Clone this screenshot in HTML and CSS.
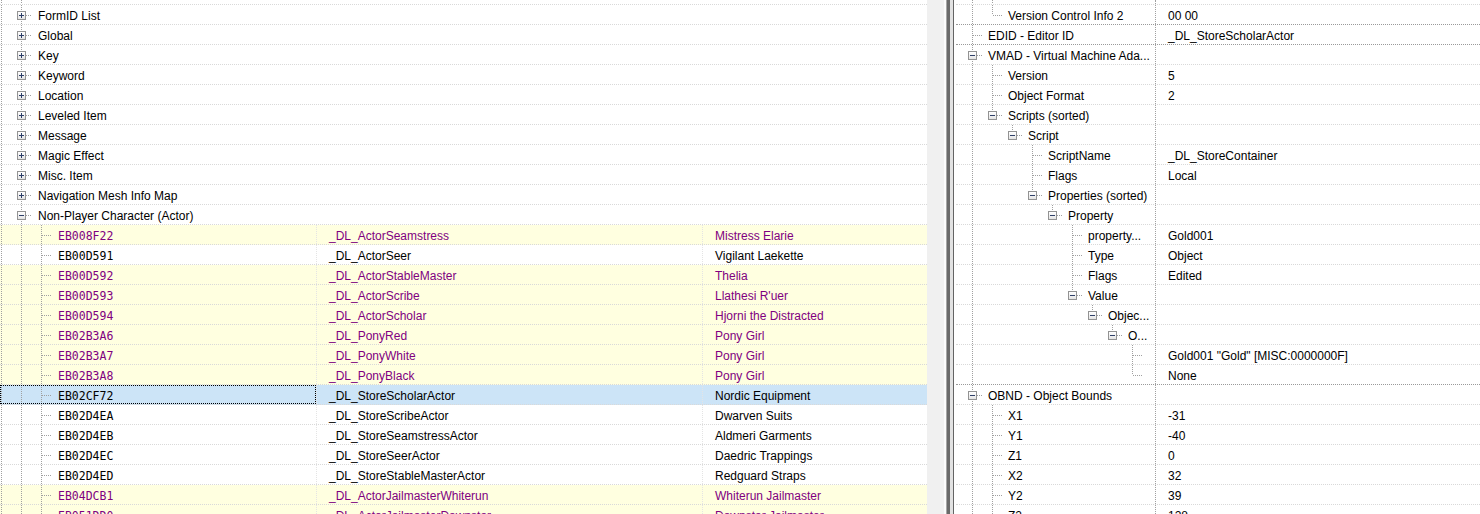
FILE: index.html
```html
<!DOCTYPE html>
<html>
<head>
  <meta charset="UTF-8">
  <title>xEdit - records</title>
  <link rel="stylesheet" href="styles.css">
</head>
<body>
<div class="app">

  <!-- record tree -->
  <div class="left">
    <div class="row top"><span class="tc g0 v"></span><span class="tc v"></span></div>
    <div class="row grp"><span class="tc g0 v"></span><span class="tc t"><i class="bx p"></i></span><span class="tx">FormID List</span></div>
    <div class="row grp"><span class="tc g0 v"></span><span class="tc t"><i class="bx p"></i></span><span class="tx">Global</span></div>
    <div class="row grp"><span class="tc g0 v"></span><span class="tc t"><i class="bx p"></i></span><span class="tx">Key</span></div>
    <div class="row grp"><span class="tc g0 v"></span><span class="tc t"><i class="bx p"></i></span><span class="tx">Keyword</span></div>
    <div class="row grp"><span class="tc g0 v"></span><span class="tc t"><i class="bx p"></i></span><span class="tx">Location</span></div>
    <div class="row grp"><span class="tc g0 v"></span><span class="tc t"><i class="bx p"></i></span><span class="tx">Leveled Item</span></div>
    <div class="row grp"><span class="tc g0 v"></span><span class="tc t"><i class="bx p"></i></span><span class="tx">Message</span></div>
    <div class="row grp"><span class="tc g0 v"></span><span class="tc t"><i class="bx p"></i></span><span class="tx">Magic Effect</span></div>
    <div class="row grp"><span class="tc g0 v"></span><span class="tc t"><i class="bx p"></i></span><span class="tx">Misc. Item</span></div>
    <div class="row grp"><span class="tc g0 v"></span><span class="tc t"><i class="bx p"></i></span><span class="tx">Navigation Mesh Info Map</span></div>
    <div class="row grp"><span class="tc g0 v"></span><span class="tc t"><i class="bx m"></i></span><span class="tx">Non-Player Character (Actor)</span></div>

    <div class="row rec hl"><div class="c1"><span class="tc g0 v"></span><span class="tc v"></span><span class="tc t"></span><span class="id">EB008F22</span></div><div class="c2">_DL_ActorSeamstress</div><div class="c3">Mistress Elarie</div></div>
    <div class="row rec"><div class="c1"><span class="tc g0 v"></span><span class="tc v"></span><span class="tc t"></span><span class="id">EB00D591</span></div><div class="c2">_DL_ActorSeer</div><div class="c3">Vigilant Laekette</div></div>
    <div class="row rec hl"><div class="c1"><span class="tc g0 v"></span><span class="tc v"></span><span class="tc t"></span><span class="id">EB00D592</span></div><div class="c2">_DL_ActorStableMaster</div><div class="c3">Thelia</div></div>
    <div class="row rec hl"><div class="c1"><span class="tc g0 v"></span><span class="tc v"></span><span class="tc t"></span><span class="id">EB00D593</span></div><div class="c2">_DL_ActorScribe</div><div class="c3">Llathesi R'uer</div></div>
    <div class="row rec hl"><div class="c1"><span class="tc g0 v"></span><span class="tc v"></span><span class="tc t"></span><span class="id">EB00D594</span></div><div class="c2">_DL_ActorScholar</div><div class="c3">Hjorni the Distracted</div></div>
    <div class="row rec hl"><div class="c1"><span class="tc g0 v"></span><span class="tc v"></span><span class="tc t"></span><span class="id">EB02B3A6</span></div><div class="c2">_DL_PonyRed</div><div class="c3">Pony Girl</div></div>
    <div class="row rec hl"><div class="c1"><span class="tc g0 v"></span><span class="tc v"></span><span class="tc t"></span><span class="id">EB02B3A7</span></div><div class="c2">_DL_PonyWhite</div><div class="c3">Pony Girl</div></div>
    <div class="row rec hl"><div class="c1"><span class="tc g0 v"></span><span class="tc v"></span><span class="tc t"></span><span class="id">EB02B3A8</span></div><div class="c2">_DL_PonyBlack</div><div class="c3">Pony Girl</div></div>
    <div class="row rec sel"><div class="c1"><span class="tc g0 v"></span><span class="tc v"></span><span class="tc t"></span><span class="id">EB02CF72</span></div><div class="c2">_DL_StoreScholarActor</div><div class="c3">Nordic Equipment</div></div>
    <div class="row rec"><div class="c1"><span class="tc g0 v"></span><span class="tc v"></span><span class="tc t"></span><span class="id">EB02D4EA</span></div><div class="c2">_DL_StoreScribeActor</div><div class="c3">Dwarven Suits</div></div>
    <div class="row rec"><div class="c1"><span class="tc g0 v"></span><span class="tc v"></span><span class="tc t"></span><span class="id">EB02D4EB</span></div><div class="c2">_DL_StoreSeamstressActor</div><div class="c3">Aldmeri Garments</div></div>
    <div class="row rec"><div class="c1"><span class="tc g0 v"></span><span class="tc v"></span><span class="tc t"></span><span class="id">EB02D4EC</span></div><div class="c2">_DL_StoreSeerActor</div><div class="c3">Daedric Trappings</div></div>
    <div class="row rec"><div class="c1"><span class="tc g0 v"></span><span class="tc v"></span><span class="tc t"></span><span class="id">EB02D4ED</span></div><div class="c2">_DL_StoreStableMasterActor</div><div class="c3">Redguard Straps</div></div>
    <div class="row rec hl"><div class="c1"><span class="tc g0 v"></span><span class="tc v"></span><span class="tc t"></span><span class="id">EB04DCB1</span></div><div class="c2">_DL_ActorJailmasterWhiterun</div><div class="c3">Whiterun Jailmaster</div></div>
    <div class="row rec hl"><div class="c1"><span class="tc g0 v"></span><span class="tc v"></span><span class="tc t"></span><span class="id">EB051DD0</span></div><div class="c2">_DL_ActorJailmasterDawnstar</div><div class="c3">Dawnstar Jailmaster</div></div>
  </div>

  <div class="split"></div>

  <!-- element view -->
  <div class="right">
    <div class="row top"><div class="nm"><span class="tc v"></span><span class="tc v"></span></div><div class="vl"></div></div>
    <div class="row end"><div class="nm"><span class="tc v"></span><span class="tc l"></span><span class="tx">Version Control Info 2</span></div><div class="vl">00 00</div></div>
    <div class="row end"><div class="nm"><span class="tc t"></span><span class="tx">EDID - Editor ID</span></div><div class="vl">_DL_StoreScholarActor</div></div>
    <div class="row"><div class="nm"><span class="tc t"><i class="bx m"></i></span><span class="tx">VMAD - Virtual Machine Ada...</span></div><div class="vl"></div></div>
    <div class="row"><div class="nm"><span class="tc v"></span><span class="tc t"></span><span class="tx">Version</span></div><div class="vl">5</div></div>
    <div class="row"><div class="nm"><span class="tc v"></span><span class="tc t"></span><span class="tx">Object Format</span></div><div class="vl">2</div></div>
    <div class="row"><div class="nm"><span class="tc v"></span><span class="tc l"><i class="bx m"></i></span><span class="tx">Scripts (sorted)</span></div><div class="vl"></div></div>
    <div class="row"><div class="nm"><span class="tc v"></span><span class="tc"></span><span class="tc l"><i class="bx m"></i></span><span class="tx">Script</span></div><div class="vl"></div></div>
    <div class="row"><div class="nm"><span class="tc v"></span><span class="tc"></span><span class="tc"></span><span class="tc t"></span><span class="tx">ScriptName</span></div><div class="vl">_DL_StoreContainer</div></div>
    <div class="row"><div class="nm"><span class="tc v"></span><span class="tc"></span><span class="tc"></span><span class="tc t"></span><span class="tx">Flags</span></div><div class="vl">Local</div></div>
    <div class="row"><div class="nm"><span class="tc v"></span><span class="tc"></span><span class="tc"></span><span class="tc l"><i class="bx m"></i></span><span class="tx">Properties (sorted)</span></div><div class="vl"></div></div>
    <div class="row"><div class="nm"><span class="tc v"></span><span class="tc"></span><span class="tc"></span><span class="tc"></span><span class="tc l"><i class="bx m"></i></span><span class="tx">Property</span></div><div class="vl"></div></div>
    <div class="row"><div class="nm"><span class="tc v"></span><span class="tc"></span><span class="tc"></span><span class="tc"></span><span class="tc"></span><span class="tc t"></span><span class="tx">property...</span></div><div class="vl">Gold001</div></div>
    <div class="row"><div class="nm"><span class="tc v"></span><span class="tc"></span><span class="tc"></span><span class="tc"></span><span class="tc"></span><span class="tc t"></span><span class="tx">Type</span></div><div class="vl">Object</div></div>
    <div class="row"><div class="nm"><span class="tc v"></span><span class="tc"></span><span class="tc"></span><span class="tc"></span><span class="tc"></span><span class="tc t"></span><span class="tx">Flags</span></div><div class="vl">Edited</div></div>
    <div class="row"><div class="nm"><span class="tc v"></span><span class="tc"></span><span class="tc"></span><span class="tc"></span><span class="tc"></span><span class="tc l"><i class="bx m"></i></span><span class="tx">Value</span></div><div class="vl"></div></div>
    <div class="row"><div class="nm"><span class="tc v"></span><span class="tc"></span><span class="tc"></span><span class="tc"></span><span class="tc"></span><span class="tc"></span><span class="tc l"><i class="bx m"></i></span><span class="tx">Objec...</span></div><div class="vl"></div></div>
    <div class="row"><div class="nm"><span class="tc v"></span><span class="tc"></span><span class="tc"></span><span class="tc"></span><span class="tc"></span><span class="tc"></span><span class="tc"></span><span class="tc l"><i class="bx m"></i></span><span class="tx">O...</span></div><div class="vl"></div></div>
    <div class="row"><div class="nm"><span class="tc v"></span><span class="tc"></span><span class="tc"></span><span class="tc"></span><span class="tc"></span><span class="tc"></span><span class="tc"></span><span class="tc"></span><span class="tc t"></span></div><div class="vl">Gold001 "Gold" [MISC:0000000F]</div></div>
    <div class="row end"><div class="nm"><span class="tc v"></span><span class="tc"></span><span class="tc"></span><span class="tc"></span><span class="tc"></span><span class="tc"></span><span class="tc"></span><span class="tc"></span><span class="tc l"></span></div><div class="vl">None</div></div>
    <div class="row"><div class="nm"><span class="tc t"><i class="bx m"></i></span><span class="tx">OBND - Object Bounds</span></div><div class="vl"></div></div>
    <div class="row"><div class="nm"><span class="tc v"></span><span class="tc t"></span><span class="tx">X1</span></div><div class="vl">-31</div></div>
    <div class="row"><div class="nm"><span class="tc v"></span><span class="tc t"></span><span class="tx">Y1</span></div><div class="vl">-40</div></div>
    <div class="row"><div class="nm"><span class="tc v"></span><span class="tc t"></span><span class="tx">Z1</span></div><div class="vl">0</div></div>
    <div class="row"><div class="nm"><span class="tc v"></span><span class="tc t"></span><span class="tx">X2</span></div><div class="vl">32</div></div>
    <div class="row"><div class="nm"><span class="tc v"></span><span class="tc t"></span><span class="tx">Y2</span></div><div class="vl">39</div></div>
    <div class="row"><div class="nm"><span class="tc v"></span><span class="tc t"></span><span class="tx">Z2</span></div><div class="vl">128</div></div>
  </div>

</div>
</body>
</html>
```

FILE: styles.css
```css
:root {
  --dv: repeating-linear-gradient(180deg, #a0a0a0 0 1px, transparent 1px 2px);
  --dh: repeating-linear-gradient(90deg, #a0a0a0 0 1px, transparent 1px 2px);
}

html, body {
  margin: 0;
  height: 100%;
}

body {
  font-family: "Liberation Sans", Arial, sans-serif;
  font-size: 12px;
  color: #000;
  background: #fff;
  overflow: hidden;
}

.app {
  display: flex;
  height: 514px;
}

.left {
  width: 927px;
  flex: none;
  overflow: hidden;
}

/* splitter + empty scroll track */
.split {
  width: 29px;
  flex: none;
  background: linear-gradient(90deg, #f0f0f0 0 17px, #fbfbfb 17px 19px, #a6a6a6 19px 20px, #6a6a6a 20px 23px, #e2e2e2 23px 26px, #646464 26px 27px, #ffffff 27px);
}

.right {
  flex: 1;
  overflow: hidden;
}

/* rows */
.row {
  display: flex;
  height: 20px;
  box-sizing: border-box;
  border-bottom: 1px dotted #d9d9d9;
  line-height: 19px;
  white-space: nowrap;
}

.row.top {
  height: 5px;
}

.row.hl {
  background: #ffffe0;
  color: #800080;
}

.row.sel {
  background: #cce4f7;
}

.row.end {
  border-bottom-color: #9a9a9a;
}

/* tree lines */
.tc {
  width: 20px;
  flex: none;
}

.tc.g0 {
  width: 11px;
}

.tc.v {
  background: var(--dv) 10px 0 / 1px 100% no-repeat;
}

.tc.g0.v {
  background-position: 1px 0;
}

.tc.t {
  background: var(--dv) 10px 0 / 1px 100% no-repeat, var(--dh) 11px 10px / 12px 1px no-repeat;
}

.tc.l {
  background: var(--dv) 10px 0 / 1px 10px no-repeat, var(--dh) 11px 10px / 12px 1px no-repeat;
}

/* expand / collapse box */
.bx {
  display: block;
  width: 9px;
  height: 9px;
  box-sizing: border-box;
  margin: 6px 0 0 6px;
  border: 1px solid #939393;
  background: linear-gradient(#ffffff, #e4e4e4);
}

.bx.m {
  background: linear-gradient(#2d3f68, #2d3f68) 1px 3px / 5px 1px no-repeat, linear-gradient(#ffffff, #e4e4e4);
}

.bx.p {
  background: linear-gradient(#2d3f68, #2d3f68) 1px 3px / 5px 1px no-repeat, linear-gradient(#2d3f68, #2d3f68) 3px 1px / 1px 5px no-repeat, linear-gradient(#ffffff, #e4e4e4);
}

/* text sits a little low in the row, like the native tree */
.tx, .id, .c2, .c3, .vl {
  padding-top: 2px;
}

.tx {
  padding-left: 7px;
}

/* left record columns */
.c1 {
  width: 316px;
  flex: none;
  display: flex;
}

.sel .c1 {
  outline: 1px dotted #000;
  outline-offset: -1px;
}

.id {
  font-family: "DejaVu Sans Mono", "Liberation Mono", monospace;
  font-size: 11.5px;
  padding-left: 7px;
}

.c2 {
  width: 386px;
  flex: none;
  box-sizing: border-box;
  padding-left: 12px;
  border-left: 1px dotted #e4e4e4;
}

.c3 {
  flex: 1;
  padding-left: 12px;
  border-left: 1px dotted #e4e4e4;
}

/* right element view */
.nm {
  width: 200px;
  flex: none;
  display: flex;
  box-sizing: border-box;
  padding-left: 6px;
  border-right: 1px dotted #a0a0a0;
  overflow: hidden;
}

.nm .tx {
  padding-left: 6px;
}

.vl {
  flex: 1;
  padding-left: 12px;
}
```
